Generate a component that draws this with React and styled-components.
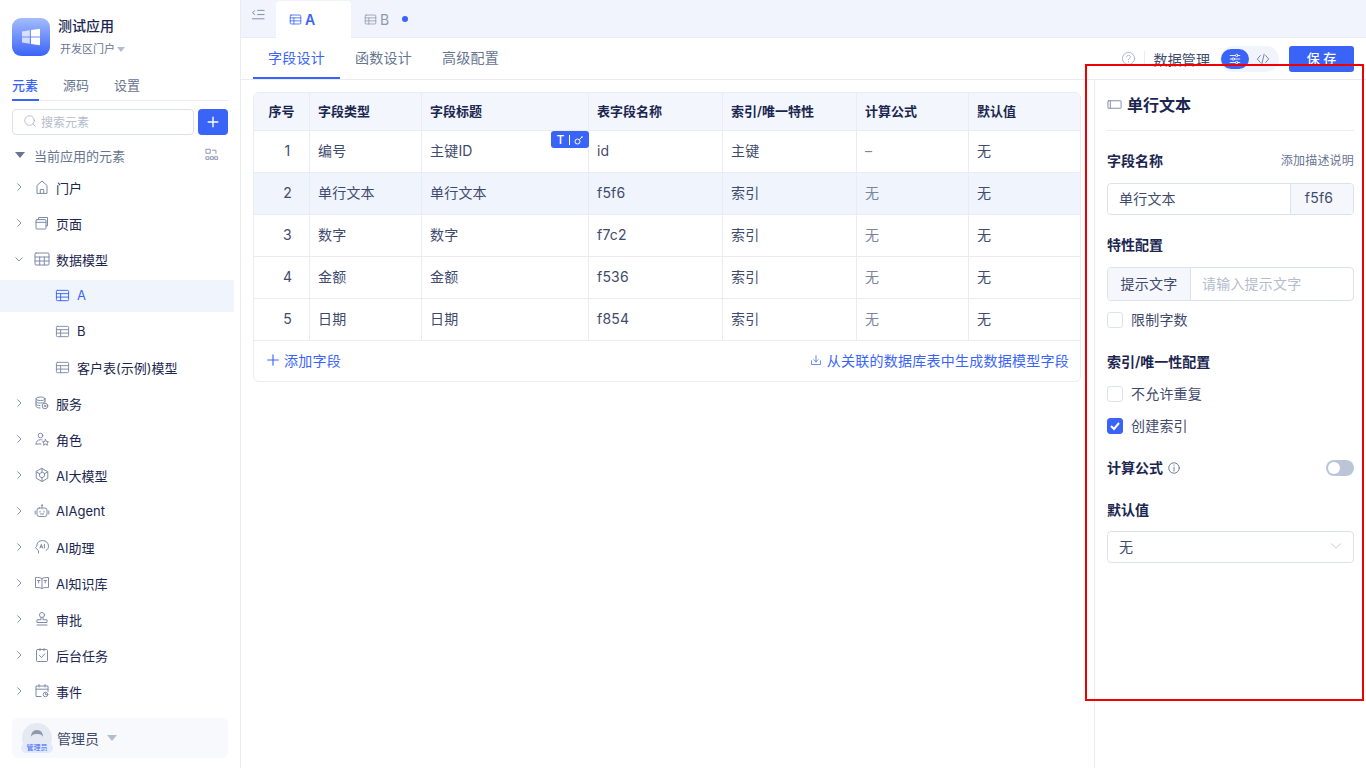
import React from "react";
import styled, { createGlobalStyle } from "styled-components";

const BLUE = "#3a64f8";
const INK = "#1a2650";
const BODY = "#3f4b6c";
const MUTED = "#68758f";
const LINE = "#e9ecf4";
const FIELD = "#dde1ec";
const ICON = "#7e8aa8";

const GlobalStyle = createGlobalStyle`
  * { box-sizing: border-box; }
  html, body { margin: 0; padding: 0; height: 100%; background: #fff; }
  body {
    font-family: Inter, "Noto Sans CJK SC", "Noto Sans", sans-serif;
    font-size: 14px;
    color: ${INK};
    overflow: hidden;
  }
`;

const Svg = ({ size = 16, color = ICON, width = 1, children }) => (
  <svg
    width={size}
    height={size}
    viewBox="0 0 16 16"
    fill="none"
    stroke={color}
    strokeWidth={width}
    strokeLinecap="round"
    strokeLinejoin="round"
  >
    {children}
  </svg>
);

const Chevron = ({ open }) => (
  <svg width="10" height="10" viewBox="0 0 10 10" fill="none" stroke="#8490ac" strokeWidth="1">
    {open ? <path d="M1.5 3.5 5 7l3.5-3.5" /> : <path d="M3.5 1.5 7 5 3.5 8.5" />}
  </svg>
);

const TableIcon = ({ color = ICON, size = 15 }) => (
  <Svg size={size} color={color}>
    <rect x="1.5" y="2.5" width="13" height="11" rx="1" />
    <path d="M1.5 6h13M1.5 9.7h13M6 6v7.5" />
  </Svg>
);

const icons = {
  home: (
    <Svg>
      <path d="M3 14V6.5L8 2l5 4.5V14z" />
      <path d="M6.3 14v-3.6h3.4V14" />
    </Svg>
  ),
  page: (
    <Svg>
      <rect x="2" y="4.6" width="10" height="9.4" rx="1" />
      <path d="M2 7.3h10M4.6 4.5V2.5h8.9v8.4h-1.5" />
    </Svg>
  ),
  model: (
    <Svg>
      <rect x="1" y="2" width="14" height="12" rx="1" />
      <path d="M1 6h14M1 10h14M5.7 6v8M10.3 6v8" />
    </Svg>
  ),
  service: (
    <Svg>
      <ellipse cx="6.5" cy="3.8" rx="4.5" ry="1.8" />
      <path d="M2 3.8v7.4c0 1 2 1.8 4 1.8M2 6.3c0 1 2 1.8 4.5 1.8S11 7.3 11 6.3M2 8.8c0 1 2 1.8 4 1.8M11 4v3" />
      <circle cx="11" cy="11" r="2.8" />
      <circle cx="11" cy="11" r="0.8" />
    </Svg>
  ),
  role: (
    <Svg>
      <circle cx="6.5" cy="4.5" r="2.3" />
      <path d="M2 13c0-2.5 1.8-4.3 4.5-4.3.6 0 1 .1 1.5.2M2 13h5" />
      <path d="m11.5 8.5 1 2 2 .3-1.5 1.4.4 2-1.9-1-1.9 1 .4-2-1.5-1.4 2-.3z" />
    </Svg>
  ),
  llm: (
    <Svg>
      <path d="M8 1.5 13.8 4.8v6.4L8 14.5 2.2 11.2V4.800z" />
      <path d="M8 5.3 5.6 6.7v2.7L8 10.800l2.4-1.400V6.700zM8 1.500v3.800M2.200 4.800l3.400 1.900M13.800 4.800l-3.400 1.900M8 10.800v3.700" />
    </Svg>
  ),
  agent: (
    <Svg>
      <rect x="3" y="5" width="10" height="8.5" rx="2.2" />
      <path d="M8 5V2.8M1.200 8v3M14.800 8v3M6 8.300v.8M10 8.300v.8M6.500 11h3" />
      <circle cx="8" cy="2.2" r=".5" />
    </Svg>
  ),
  assistant: (
    <Svg>
      <path d="M4.500 14v-2.200L1.500 8.600l1.200-1.400C2.700 3.800 5 1.500 8.500 1.500c3.400 0 6 2.400 6 5.600 0 2-.9 3.500-2.500 4.500" />
      <path d="M6 9l1.300-3.600L8.600 9M6.400 8h1.800M10.400 5.400V9" />
    </Svg>
  ),
  knowledge: (
    <Svg>
      <path d="M8 3.500c-1.500-1-4-1-6.500-1v10c2.500 0 5 0 6.500 1 1.500-1 4-1 6.500-1v-10c-2.500 0-5 0-6.500 1zM8 3.500v10" />
      <path d="M3.500 5.500h2.500M4.700 5.500v2.500M10 5.500h2.500M11.200 5.500v2.500" />
    </Svg>
  ),
  approve: (
    <Svg>
      <circle cx="8" cy="4" r="2.5" />
      <path d="M7 6.500v2.300H3v2.700h10V8.800H9V6.500M3 14h10" />
    </Svg>
  ),
  task: (
    <Svg>
      <rect x="2.5" y="2.5" width="11" height="12" rx="1" />
      <path d="M6 1.500v2.200M10 1.500v2.200M5.500 8.500l2 2 3.200-3.500" />
    </Svg>
  ),
  event: (
    <Svg>
      <path d="M7 13.500H2V3h12v5.500M2 6.200h12M5 1.500V4M11 1.500V4" />
      <circle cx="11.5" cy="11.5" r="2.3" />
      <path d="M11.500 10.500v1.200h1" />
    </Svg>
  ),
};

const Shell = styled.div`
  display: flex;
  height: 768px;
  width: 1366px;
  overflow: hidden;
  position: relative;
`;

/* left sidebar */
const Sidebar = styled.aside`
  width: 241px;
  flex: none;
  display: flex;
  flex-direction: column;
  border-right: 1px solid ${LINE};
`;

const Brand = styled.div`
  display: flex;
  gap: 8px;
  padding: 18px 12px 0;
  height: 70px;
`;

const BrandLogo = styled.div`
  width: 38px;
  height: 38px;
  border-radius: 9px;
  background: linear-gradient(180deg, #a4bcfc 0%, #3a64f8 100%);
  display: flex;
  align-items: center;
  justify-content: center;
`;

const BrandName = styled.div`
  font-size: 14px;
  font-weight: 500;
  line-height: 18px;
  margin-top: -1px;
`;

const BrandEnv = styled.div`
  display: flex;
  align-items: center;
  gap: 2px;
  margin: 6px 0 0 2px;
  font-size: 11px;
  line-height: 16px;
  color: ${MUTED};
`;

const Caret = styled.span`
  width: 0;
  height: 0;
  margin-left: ${(p) => p.$left || 0}px;
  border-left: ${(p) => p.$size || 4}px solid transparent;
  border-right: ${(p) => p.$size || 4}px solid transparent;
  border-top: ${(p) => (p.$size || 4) + 1}px solid ${(p) => p.$color || "#b4bccf"};
`;

const SideTabs = styled.div`
  display: flex;
  gap: 24px;
  margin: 0 12px;
  height: 31px;
  border-bottom: 1px solid ${LINE};
`;

const SideTab = styled.div`
  width: 27px;
  font-size: 13px;
  line-height: 30px;
  height: 31px;
  white-space: nowrap;
  color: ${(p) => (p.$active ? BLUE : MUTED)};
  font-weight: ${(p) => (p.$active ? 500 : 400)};
  border-bottom: 2px solid ${(p) => (p.$active ? BLUE : "transparent")};
`;

const SearchRow = styled.div`
  display: flex;
  gap: 4px;
  margin: 8px 12px 0;
`;

const SearchBox = styled.div`
  flex: 1;
  height: 26px;
  border: 1px solid ${FIELD};
  border-radius: 4px;
  display: flex;
  align-items: center;
  gap: 4px;
  padding: 0 0 2px 10px;
  font-size: 12px;
  color: #b5bccd;
`;

const AddButton = styled.div`
  width: 30px;
  height: 26px;
  border-radius: 4px;
  background: ${BLUE};
  display: flex;
  align-items: center;
  justify-content: center;
`;

const TreeHead = styled.div`
  display: flex;
  align-items: center;
  height: 24px;
  margin-top: 8px;
  padding: 0 21px 0 15px;
  font-size: 13px;
  color: ${MUTED};
`;

const TreeHeadLabel = styled.span`
  flex: 1;
  margin-left: 9px;
`;

const Tree = styled.div`
  flex: 1;
  display: flex;
  flex-direction: column;
  gap: 4px;
  margin-top: 5px;
`;

const TreeRow = styled.div`
  display: flex;
  align-items: center;
  height: 32px;
  flex: none;
  margin-right: 6px;
  padding: 0 0 2px ${(p) => (p.$child ? 55 : 14)}px;
  background: ${(p) => (p.$active ? "#f0f4fd" : "transparent")};
  color: ${(p) => (p.$active ? BLUE : INK)};
  font-size: 13px;
  white-space: nowrap;
`;

const TreeChevron = styled.span`
  width: 20px;
  display: flex;
`;

const TreeIcon = styled.span`
  width: 16px;
  margin-right: 6px;
  display: flex;
  justify-content: center;
`;

const ChildIcon = styled.span`
  width: 22px;
  display: flex;
`;

const UserCard = styled.div`
  height: 40px;
  margin: 0 12px 10px;
  padding-left: 10px;
  border-radius: 6px;
  background: #f8f9fc;
  display: flex;
  align-items: center;
  gap: 5px;
  font-size: 14px;
  color: ${BODY};
`;

const Avatar = styled.div`
  width: 30px;
  height: 30px;
  border-radius: 50%;
  background: #e5e9f2;
  position: relative;
  display: flex;
  justify-content: center;
  padding-top: 6px;
`;

const AvatarTag = styled.span`
  position: absolute;
  left: -1px;
  bottom: 0;
  width: 32px;
  height: 10px;
  border-radius: 5px;
  background: #e3eafd;
  color: ${BLUE};
  font-size: 7px;
  line-height: 10px;
  text-align: center;
  white-space: nowrap;
`;

/* main column */
const Main = styled.main`
  flex: 1;
  min-width: 0;
  display: flex;
  flex-direction: column;
`;

const DocTabs = styled.div`
  height: 38px;
  flex: none;
  display: flex;
  background: #f1f4fd;
  border-bottom: 1px solid ${LINE};
`;

const CollapseBtn = styled.div`
  width: 35px;
  padding: 8px 0 0 10px;
`;

const DocTab = styled.div`
  width: ${(p) => (p.$active ? "75px" : "auto")};
  height: ${(p) => (p.$active ? "37px" : "36px")};
  margin-top: 1px;
  padding: 0 0 0 13px;
  display: flex;
  align-items: center;
  gap: 3px;
  border-radius: 4px 4px 0 0;
  background: ${(p) => (p.$active ? "#fff" : "transparent")};
  color: ${(p) => (p.$active ? BLUE : "#8e98b2")};
  font-weight: ${(p) => (p.$active ? 600 : 400)};
  font-size: 14px;
`;

const DirtyDot = styled.span`
  width: 6px;
  height: 6px;
  margin-left: 10px;
  border-radius: 50%;
  background: ${BLUE};
`;

const SubBar = styled.div`
  height: 42px;
  flex: none;
  padding: 0 12px;
  display: flex;
  align-items: center;
  border-bottom: 1px solid ${LINE};
`;

const SubTab = styled.div`
  height: 41px;
  padding: 0 15px;
  font-size: 14px;
  line-height: 40px;
  letter-spacing: 0.25px;
  color: ${(p) => (p.$active ? BLUE : MUTED)};
  border-bottom: 2px solid ${(p) => (p.$active ? BLUE : "transparent")};
`;

const SubActions = styled.div`
  margin-left: auto;
  display: flex;
  align-items: center;
`;

const HelpWrap = styled.div`
  display: flex;
  padding-right: 8px;
  margin-right: 9px;
  border-right: 1px solid ${LINE};
`;

const ManageLabel = styled.span`
  font-size: 14px;
  color: ${BODY};
  letter-spacing: 0.1px;
`;

const ModeSwitch = styled.div`
  width: 59px;
  height: 26px;
  margin: 0 10px;
  border-radius: 13px;
  background: #f1f4fd;
  display: flex;
  align-items: center;
  padding-left: 1px;
`;

const ModeItem = styled.div`
  width: 28px;
  height: 20px;
  border-radius: 10px;
  background: ${(p) => (p.$active ? BLUE : "transparent")};
  display: flex;
  align-items: center;
  justify-content: center;
`;

const SaveButton = styled.div`
  width: 65px;
  height: 26px;
  border-radius: 3px;
  background: ${BLUE};
  color: #fff;
  font-size: 13px;
  font-weight: 500;
  line-height: 25px;
  text-align: center;
  white-space: pre;
`;

const Body = styled.div`
  flex: 1;
  min-height: 0;
  display: flex;
`;

const Designer = styled.section`
  flex: 1;
  min-width: 0;
  padding: 12px 13px 0 12px;
`;

const FieldTable = styled.div`
  border: 1px solid ${LINE};
  border-radius: 6px;
  overflow: hidden;
`;

const TableRow = styled.div`
  display: grid;
  grid-template-columns: 56px 112px 167px 134px 134px 112px 1fr;
  height: ${(p) => (p.$head ? 38 : 42)}px;
  background: ${(p) => (p.$head ? "#f3f6fc" : p.$active ? "#f0f4fd" : "#fff")};
  border-bottom: 1px solid ${LINE};
`;

const Cell = styled.div`
  position: relative;
  display: flex;
  align-items: center;
  justify-content: ${(p) => (p.$center ? "center" : "flex-start")};
  padding: 0 ${(p) => (p.$center ? 0 : 8)}px ${(p) => (p.$head ? 2 : 3)}px ${(p) => (p.$num ? 12 : p.$center ? 0 : 8)}px;
  border-right: 1px solid ${LINE};
  font-size: ${(p) => (p.$head ? 13 : 14)}px;
  font-weight: ${(p) => (p.$head ? 600 : 400)};
  letter-spacing: ${(p) => (p.$head ? 0 : 0.2)}px;
  color: ${(p) => (p.$head ? INK : p.$faint ? "#7a859f" : BODY)};
  white-space: nowrap;
  &:last-child { border-right: 0; }
`;

const KeyBadge = styled.div`
  position: absolute;
  top: 0;
  right: -1px;
  width: 38px;
  height: 17px;
  border-radius: 3px;
  background: ${BLUE};
  color: #fff;
  font-size: 12px;
  font-weight: 500;
  display: flex;
  align-items: center;
  justify-content: center;
  gap: 4px;
`;

const BadgeBar = styled.span`
  width: 1px;
  height: 10px;
  background: #fff;
`;

const TableFoot = styled.div`
  height: 40px;
  padding: 0 11px 2px 12px;
  display: flex;
  align-items: center;
  justify-content: space-between;
  color: ${BLUE};
  font-size: 14px;
  letter-spacing: 0.25px;
`;

const FootLink = styled.div`
  display: flex;
  align-items: center;
  gap: ${(p) => p.$gap}px;
`;

/* right panel */
const Panel = styled.aside`
  width: 272px;
  flex: none;
  padding: 0 12px;
  border-left: 1px solid ${LINE};
`;

const PanelTitle = styled.div`
  height: 51px;
  display: flex;
  align-items: center;
  gap: 5px;
  padding-bottom: 2px;
  border-bottom: 1px solid ${LINE};
  font-size: 16px;
  font-weight: 600;
`;

const SectionHead = styled.div`
  display: flex;
  align-items: center;
  justify-content: space-between;
  font-size: 14px;
  font-weight: 600;
  line-height: 20px;
  margin-top: ${(p) => p.$top}px;
`;

const HeadLabel = styled.span`
  display: flex;
  align-items: center;
  gap: 4px;
`;

const HeadHint = styled.span`
  font-size: 12px;
  font-weight: 400;
  letter-spacing: 0.2px;
  color: ${MUTED};
`;

const InputGroup = styled.div`
  display: flex;
  height: ${(p) => p.$height}px;
  margin-top: ${(p) => p.$top}px;
  border: 1px solid ${FIELD};
  border-radius: 4px;
  overflow: hidden;
  font-size: 14px;
  letter-spacing: 0.2px;
`;

const InputText = styled.div`
  flex: 1;
  display: flex;
  align-items: center;
  padding: 0 0 3px 11px;
  color: ${(p) => (p.$placeholder ? "#b5bccd" : BODY)};
`;

const Addon = styled.div`
  width: ${(p) => p.$width}px;
  flex: none;
  display: flex;
  align-items: center;
  justify-content: center;
  padding: 0 ${(p) => (p.$right ? 6 : 0)}px 3px 0;
  background: #f5f7fc;
  color: ${BODY};
  border-left: ${(p) => (p.$right ? `1px solid ${FIELD}` : 0)};
  border-right: ${(p) => (p.$right ? 0 : `1px solid ${FIELD}`)};
`;

const CheckRow = styled.div`
  display: flex;
  align-items: center;
  gap: 8px;
  height: 20px;
  margin-top: ${(p) => p.$top}px;
  font-size: 14px;
  letter-spacing: 0.2px;
  color: ${BODY};
`;

const CheckLabel = styled.span`
  padding-bottom: 3px;
`;

const CheckBox = styled.span`
  width: 16px;
  height: 16px;
  border-radius: 3px;
  border: 1px solid ${(p) => (p.$on ? BLUE : FIELD)};
  background: ${(p) => (p.$on ? BLUE : "#fff")};
  display: flex;
  align-items: center;
  justify-content: center;
`;

const Toggle = styled.span`
  width: 28px;
  height: 16px;
  border-radius: 8px;
  background: #bcc4d8;
  padding: 2px;
  display: flex;
`;

const ToggleKnob = styled.span`
  width: 12px;
  height: 12px;
  border-radius: 50%;
  background: #fff;
`;

const SelectBox = styled.div`
  height: 32px;
  margin-top: 11px;
  padding: 0 11px 3px;
  border: 1px solid ${FIELD};
  border-radius: 4px;
  display: flex;
  align-items: center;
  justify-content: space-between;
  font-size: 14px;
  color: ${BODY};
`;

const Annotation = styled.div`
  position: absolute;
  left: 1085px;
  top: 64px;
  width: 279px;
  height: 637px;
  border: 2px solid #f00000;
  pointer-events: none;
`;

const treeItems = [
  { label: "门户", icon: "home" },
  { label: "页面", icon: "page" },
  { label: "数据模型", icon: "model", open: true },
  { label: "A", child: true, active: true },
  { label: "B", child: true },
  { label: "客户表(示例)模型", child: true },
  { label: "服务", icon: "service" },
  { label: "角色", icon: "role" },
  { label: "AI大模型", icon: "llm" },
  { label: "AIAgent", icon: "agent" },
  { label: "AI助理", icon: "assistant" },
  { label: "AI知识库", icon: "knowledge" },
  { label: "审批", icon: "approve" },
  { label: "后台任务", icon: "task" },
  { label: "事件", icon: "event" },
];

const rows = [
  ["1", "编号", "主键ID", "id", "主键", "–", "无"],
  ["2", "单行文本", "单行文本", "f5f6", "索引", "无", "无"],
  ["3", "数字", "数字", "f7c2", "索引", "无", "无"],
  ["4", "金额", "金额", "f536", "索引", "无", "无"],
  ["5", "日期", "日期", "f854", "索引", "无", "无"],
];

const headers = ["序号", "字段类型", "字段标题", "表字段名称", "索引/唯一特性", "计算公式", "默认值"];

const App = () => (
  <>
    <GlobalStyle />
    <Shell>
      <Sidebar>
        <Brand>
          <BrandLogo>
            <svg width="20" height="20" viewBox="0 0 20 20" fill="#fff">
              <path opacity="0.7" d="M1 4.500 8.800 3.300v6.100H1zM1 10.600h7.800v6.100L1 15.500z" />
              <path d="M10 3.100 19 1.800v7.600h-9zM10 10.600h9v7.600l-9-1.300z" />
            </svg>
          </BrandLogo>
          <div>
            <BrandName>测试应用</BrandName>
            <BrandEnv>
              开发区门户 <Caret />
            </BrandEnv>
          </div>
        </Brand>
        <SideTabs>
          <SideTab $active>元素</SideTab>
          <SideTab>源码</SideTab>
          <SideTab>设置</SideTab>
        </SideTabs>
        <SearchRow>
          <SearchBox>
            <Svg size={14} color="#aeb6c9">
              <circle cx="7.5" cy="7.5" r="5.5" />
              <path d="m11.5 11.5 2.5 2.5" />
            </Svg>
            搜索元素
          </SearchBox>
          <AddButton>
            <Svg size={14} color="#fff" width={1.6}>
              <path d="M8 2.500v11M2.500 8h11" />
            </Svg>
          </AddButton>
        </SearchRow>
        <TreeHead>
          <Caret $size={5} $color="#68758f" />
          <TreeHeadLabel>当前应用的元素</TreeHeadLabel>
          <Svg size={14}>
            <rect x="1.5" y="1.5" width="4.5" height="4.5" />
            <path d="M8.500 2.500h4v3.500M1.500 10h3v3h-3zM6.500 10h3v3h-3zM11.500 10h3v3h-3z" />
          </Svg>
        </TreeHead>
        <Tree>
          {treeItems.map((item) => (
            <TreeRow key={item.label} $child={item.child} $active={item.active}>
              {item.child ? (
                <ChildIcon>
                  <TableIcon color={item.active ? BLUE : ICON} />
                </ChildIcon>
              ) : (
                <>
                  <TreeChevron>
                    <Chevron open={item.open} />
                  </TreeChevron>
                  <TreeIcon>{icons[item.icon]}</TreeIcon>
                </>
              )}
              {item.label}
            </TreeRow>
          ))}
        </Tree>
        <UserCard>
          <Avatar>
            <svg width="14" height="12" viewBox="0 0 14 12" fill="#8e98ae">
              <path d="M1 8c0-4 2-7 6-7s6 3 6 7c-1-2-2-3-6-3S2 6 1 8z" />
            </svg>
            <AvatarTag>管理员</AvatarTag>
          </Avatar>
          管理员
          <Caret $color="#b4bccf" $size={5} $left={3} />
        </UserCard>
      </Sidebar>

      <Main>
        <DocTabs>
          <CollapseBtn>
            <Svg size={15}>
              <path d="M4 3 1.500 5 4 7M7 2.500h7M7 7h7M1.500 11.500h12.500" />
            </Svg>
          </CollapseBtn>
          <DocTab $active>
            <TableIcon color={BLUE} size={13} />A
          </DocTab>
          <DocTab>
            <TableIcon color="#8e98b2" size={13} />B
            <DirtyDot />
          </DocTab>
        </DocTabs>
        <SubBar>
          <SubTab $active>字段设计</SubTab>
          <SubTab>函数设计</SubTab>
          <SubTab>高级配置</SubTab>
          <SubActions>
            <HelpWrap>
              <Svg size={15} color="#a9b2c6">
                <circle cx="8" cy="8" r="6.5" />
                <path d="M6 6.300C6 5 7 4.500 8 4.500s2 .7 2 1.800c0 1.400-2 1.500-2 3M8 11.300v.4" />
              </Svg>
            </HelpWrap>
            <ManageLabel>数据管理</ManageLabel>
            <ModeSwitch>
              <ModeItem $active>
                <Svg size={14} color="#fff">
                  <path d="M2.500 4h6M11.500 4h2M2.500 8h2M7.500 8h6M2.500 12h6M11.500 12h2" />
                  <circle cx="10" cy="4" r="1.4" />
                  <circle cx="6" cy="8" r="1.4" />
                  <circle cx="10" cy="12" r="1.4" />
                </Svg>
              </ModeItem>
              <ModeItem>
                <Svg size={14} color="#68758f">
                  <path d="M5 4 1.500 8 5 12M11 4l3.500 4L11 12M9.300 2.500l-2.600 11" />
                </Svg>
              </ModeItem>
            </ModeSwitch>
            <SaveButton>保 存</SaveButton>
          </SubActions>
        </SubBar>
        <Body>
          <Designer>
            <FieldTable>
              <TableRow $head>
                {headers.map((h, i) => (
                  <Cell key={h} $head $center={i === 0}>
                    {h}
                  </Cell>
                ))}
              </TableRow>
              {rows.map((row, r) => (
                <TableRow key={row[0]} $active={r === 1}>
                  {row.map((value, i) => (
                    <Cell key={i} $center={i === 0} $num={i === 0} $faint={i === 5}>
                      {value}
                      {r === 0 && i === 2 && (
                        <KeyBadge>
                          T
                          <BadgeBar />
                          <svg width="10" height="10" viewBox="0 0 10 10" fill="none" stroke="#fff">
                            <circle cx="3.5" cy="6.5" r="2.5" />
                            <path d="m5.500 4.500 3-3M7.500 1.500l1 1" />
                          </svg>
                        </KeyBadge>
                      )}
                    </Cell>
                  ))}
                </TableRow>
              ))}
              <TableFoot>
                <FootLink $gap={4}>
                  <Svg size={14} color={BLUE} width={1.3}>
                    <path d="M8 2v12M2 8h12" />
                  </Svg>
                  添加字段
                </FootLink>
                <FootLink $gap={5}>
                  <Svg size={12} color={BLUE}>
                    <path d="M2 9v5h12V9M8 2v8.500M5 7.500l3 3 3-3" />
                  </Svg>
                  从关联的数据库表中生成数据模型字段
                </FootLink>
              </TableFoot>
            </FieldTable>
          </Designer>

          <Panel>
            <PanelTitle>
              <Svg size={15}>
                <rect x="1" y="4" width="14" height="8" rx="0.5" />
                <path d="M3.500 4v8" />
              </Svg>
              单行文本
            </PanelTitle>
            <SectionHead $top={20}>
              字段名称
              <HeadHint>添加描述说明</HeadHint>
            </SectionHead>
            <InputGroup $height={32} $top={12}>
              <InputText>单行文本</InputText>
              <Addon $right $width={63}>
                f5f6
              </Addon>
            </InputGroup>
            <SectionHead $top={20}>特性配置</SectionHead>
            <InputGroup $height={34} $top={12}>
              <Addon $width={83}>提示文字</Addon>
              <InputText $placeholder>请输入提示文字</InputText>
            </InputGroup>
            <CheckRow $top={9}>
              <CheckBox />
              <CheckLabel>限制字数</CheckLabel>
            </CheckRow>
            <SectionHead $top={22}>索引/唯一性配置</SectionHead>
            <CheckRow $top={12}>
              <CheckBox />
              <CheckLabel>不允许重复</CheckLabel>
            </CheckRow>
            <CheckRow $top={12}>
              <CheckBox $on>
                <svg width="12" height="12" viewBox="0 0 12 12" fill="none" stroke="#fff" strokeWidth="2">
                  <path d="m2 6 3 3 5-6" />
                </svg>
              </CheckBox>
              <CheckLabel>创建索引</CheckLabel>
            </CheckRow>
            <SectionHead $top={22}>
              <HeadLabel>
                计算公式
                <Svg size={14} color="#5f6c8c">
                  <circle cx="8" cy="8" r="6" />
                  <path d="M8 7v4.500M8 4.500v.4" />
                </Svg>
              </HeadLabel>
              <Toggle>
                <ToggleKnob />
              </Toggle>
            </SectionHead>
            <SectionHead $top={22}>默认值</SectionHead>
            <SelectBox>
              无
              <Svg size={12} color="#b5bccd">
                <path d="M2 5l6 6 6-6" />
              </Svg>
            </SelectBox>
          </Panel>
        </Body>
      </Main>
      <Annotation />
    </Shell>
  </>
);

export default App;
